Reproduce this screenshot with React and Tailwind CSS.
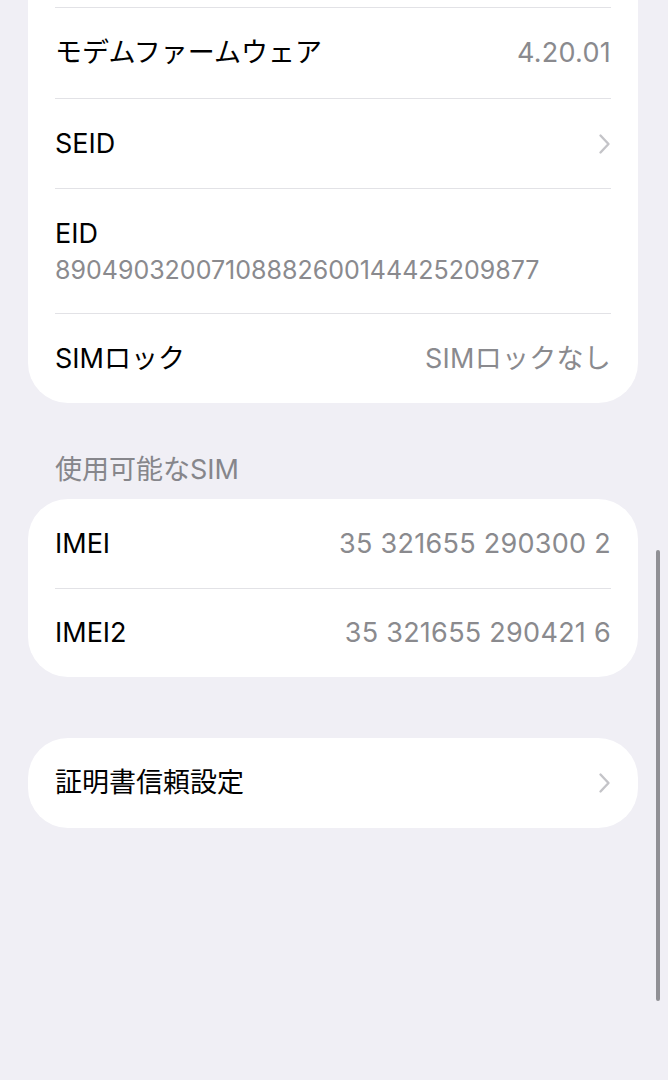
import React from 'react';

const FONT = { fontFamily: 'Inter, "Noto Sans CJK JP", sans-serif' };

function Chevron() {
  return (
    <svg width="13" height="22" viewBox="0 0 13 22" fill="none" className="shrink-0">
      <path d="M2.5 2.5 L10.5 11 L2.5 19.5" stroke="#c4c4c8" strokeWidth="2.4" strokeLinecap="round" strokeLinejoin="round" />
    </svg>
  );
}

function Row({ label, value, chevron, first }) {
  return (
    <div className={`flex h-[90px] items-center justify-between ${first ? '' : 'border-t border-[#e2e2e6]'}`}>
      <span className="text-[27px] leading-[34px] text-black">{label}</span>
      {value && <span className="text-[27px] leading-[34px] tracking-[0.01em] text-[#8a8a8e]">{value}</span>}
      {chevron && <span><Chevron /></span>}
    </div>
  );
}

function App() {
  return (
    <div className="relative min-h-screen overflow-hidden bg-[#f0eff5]" style={FONT}>
      {/* device info card (top cut off) */}
      <div className="ml-[28px] mr-[30px] rounded-b-[40px] bg-white px-[27px] pt-[7px]">
        <div className="border-t border-[#e2e2e6]">
          <Row first label="モデムファームウェア" value="4.20.01" />
        </div>
        <Row label="SEID" chevron />
        <div className="flex h-[125px] flex-col justify-center border-t border-[#e2e2e6]">
          <span className="text-[27px] leading-[34px] text-black">EID</span>
          <span className="pt-[3px] text-[25px] leading-[32px] text-[#8a8a8e]">89049032007108882600144425209877</span>
        </div>
        <Row label="SIMロック" value="SIMロックなし" />
      </div>

      <div className="mb-[12px] px-[55px] pt-[50px] text-[27px] leading-[34px] text-[#86868b]">使用可能なSIM</div>

      <div className="ml-[28px] mr-[30px] rounded-[40px] bg-white px-[27px]">
        <div className="flex h-[89px] items-center justify-between">
          <span className="text-[27px] leading-[34px] text-black">IMEI</span>
          <span className="text-[27px] leading-[34px] tracking-[0.01em] text-[#8a8a8e]">35 321655 290300 2</span>
        </div>
        <div className="flex h-[89px] items-center justify-between border-t border-[#e2e2e6]">
          <span className="text-[27px] leading-[34px] text-black">IMEI2</span>
          <span className="text-[27px] leading-[34px] tracking-[0.01em] text-[#8a8a8e]">35 321655 290421 6</span>
        </div>
      </div>

      <div className="ml-[28px] mr-[30px] mt-[61px] rounded-[40px] bg-white px-[27px]">
        <Row first label="証明書信頼設定" chevron />
      </div>

      {/* scroll indicator */}
      <div className="absolute left-[656px] top-[550px] h-[451px] w-[4px] rounded-full bg-[#909095]" />
    </div>
  );
}

export default App;
